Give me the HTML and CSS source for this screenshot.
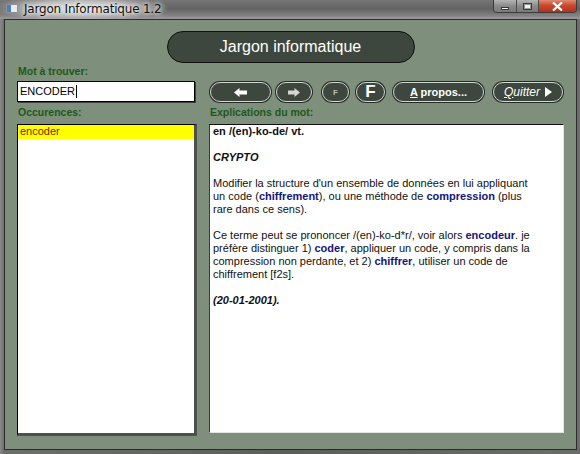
FILE: index.html
```html
<!DOCTYPE html>
<html lang="fr">
<head>
<meta charset="utf-8">
<title>Jargon Informatique 1.2</title>
<link rel="stylesheet" href="styles.css">
</head>
<body>
<div class="window">
  <div class="titlebar">
    <span class="appicon"><span class="appicon-blue"></span></span>
    <span class="title">Jargon Informatique 1.2</span>
    <div class="caption">
      <span class="cap-btn cap-min"><span class="glyph-min"></span></span>
      <span class="cap-btn cap-max"><span class="glyph-max"></span></span>
      <span class="cap-btn cap-close">
        <svg width="11" height="9" viewBox="0 0 11 9"><path d="M1 0.5 L5.5 4.5 L10 0.5 M1 8.5 L5.5 4.5 L10 8.5" stroke="#fff" stroke-width="2.2" fill="none"/></svg>
      </span>
    </div>
  </div>
  <div class="client">
    <div class="banner"><div class="pill">Jargon informatique</div></div>
    <div class="grid">
      <div class="lbl lbl-top">Mot à trouver:</div>
      <div></div>
      <div class="input"><span>ENCODER</span><span class="caret"></span></div>
      <div class="toolbar">
        <span class="btn b-prev">
          <svg width="13" height="9" viewBox="0 0 13 9"><polygon points="0,4.5 5.5,0 5.5,2.5 13,2.5 13,6.5 5.5,6.5 5.5,9" fill="#fff"/></svg>
        </span>
        <span class="btn b-next">
          <svg width="12" height="9" viewBox="0 0 12 9"><polygon points="12,4.5 6.5,0 6.5,2.5 0,2.5 0,6.5 6.5,6.5 6.5,9" fill="#d6d6d6"/></svg>
        </span>
        <span class="btn b-fsmall">F</span>
        <span class="btn b-fbig">F</span>
        <span class="btn b-apropos"><span><u>A</u> propos...</span></span>
        <span class="btn b-quit"><span class="qt"><u>Q</u>uitter</span>
          <svg width="7" height="10" viewBox="0 0 7 10"><polygon points="0,0 7,5 0,10" fill="#fff"/></svg>
        </span>
      </div>
      <div class="lbl lbl-mid">Occurences:</div>
      <div class="lbl lbl-mid">Explications du mot:</div>
      <div class="list"><div class="item sel">encoder</div></div>
      <div class="expl">
        <div class="ln b">en /(en)-ko-de/ vt.</div>
        <div class="ln gap"></div>
        <div class="ln bi">CRYPTO</div>
        <div class="ln gap"></div>
        <div class="ln">Modifier la structure d'un ensemble de données en lui appliquant</div>
        <div class="ln">un code (<b class="ref">chiffrement</b>), ou une méthode de <b class="ref">compression</b> (plus</div>
        <div class="ln">rare dans ce sens).</div>
        <div class="ln gap"></div>
        <div class="ln">Ce terme peut se prononcer /(en)-ko-d*r/, voir alors <b class="ref">encodeur</b>. je</div>
        <div class="ln">préfère distinguer 1) <b class="ref">coder</b>, appliquer un code, y compris dans la</div>
        <div class="ln">compression non perdante, et 2) <b class="ref">chiffrer</b>, utiliser un code de</div>
        <div class="ln">chiffrement [f2s].</div>
        <div class="ln gap"></div>
        <div class="ln bi">(20-01-2001).</div>
      </div>
    </div>
  </div>
</div>
</body>
</html>
```

FILE: styles.css
```css
* { box-sizing: border-box; }
html, body { margin: 0; padding: 0; }
body {
  width: 580px;
  height: 454px;
  overflow: hidden;
  font-family: "Liberation Sans", Arial, sans-serif;
  background: #6f6f6f;
}
.window {
  width: 580px;
  height: 454px;
  display: flex;
  flex-direction: column;
  background: linear-gradient(90deg, #8a8a8a 0, #6e6e6e 4px, #5d5d5d 50%, #6c6c6c 100%);
}
.titlebar {
  height: 19px;
  flex: none;
  display: flex;
  align-items: flex-start;
  background:
    radial-gradient(ellipse 90px 13px at 80px 8px, rgba(232,232,232,0.95), rgba(232,232,232,0.6) 55%, rgba(232,232,232,0) 100%),
    linear-gradient(180deg, #767676 0, #636363 45%, #808080 80%, #9c9c9c 100%);
}
.appicon {
  margin: 4px 0 0 6px;
  width: 12px;
  height: 9px;
  background: #e8ecef;
  border: 1px solid #8a9099;
  display: flex;
}
.appicon-blue { width: 4px; height: 100%; background: #4f7fb3; }
.title {
  margin: 2px 0 0 6px;
  font-family: "DejaVu Sans", sans-serif;
  font-size: 12px;
  letter-spacing: -0.2px;
  line-height: 14px;
  color: #111;
  text-shadow: 0 0 4px #fff, 0 0 6px #fff;
}
.caption {
  margin-left: auto;
  margin-right: 3px;
  display: flex;
  height: 13px;
  border: 1px solid #3c3c3c;
  border-top: none;
  border-radius: 0 0 4px 4px;
  overflow: hidden;
}
.cap-btn {
  height: 12px;
  display: flex;
  align-items: center;
  justify-content: center;
  border-right: 1px solid #4a4a4a;
}
.cap-min { width: 23px; background: linear-gradient(180deg, #b5b5b5, #8a8a8a 50%, #7a7a7a); }
.cap-max { width: 22px; background: linear-gradient(180deg, #b5b5b5, #8a8a8a 50%, #7a7a7a); }
.cap-close { width: 37px; border-right: none; background: linear-gradient(180deg, #e08a70, #c84a2e 45%, #b5301a); }
.glyph-min { width: 8px; height: 3px; background: #f2f2f2; border: 1px solid #3a3a3a; margin-top: 5px; }
.glyph-max { width: 9px; height: 7px; border: 1px solid #3a3a3a; background: #f0f0f0; box-shadow: inset 0 0 0 1px #9a9a9a; }

.client {
  flex: 1;
  margin: 0 3px 4px 4px;
  border: 1px solid #2a2c2a;
  background: #7e8f7b;
  padding: 11px 12px 0 12px;
}
.banner { display: flex; justify-content: center; height: 32px; margin-bottom: 2px; }
.pill {
  width: 248px;
  height: 32px;
  border-radius: 16px;
  background: #3d473d;
  border: 1px solid #111;
  color: #fff;
  font-size: 16px;
  display: flex;
  align-items: center;
  justify-content: center;
}
.grid {
  display: grid;
  grid-template-columns: 178px 355px;
  column-gap: 14px;
  grid-template-rows: 16px 22px 21px 309px;
}
.lbl {
  font-size: 10.5px;
  font-weight: bold;
  line-height: 13px;
  color: #1c5a1c;
  padding-left: 1px;
}
.lbl-mid { padding-top: 3px; }
.input {
  height: 21px;
  background: #fff;
  border: 1px solid #000;
  box-shadow: 1px 1px 0 #3c3f3c;
  font-size: 11px;
  line-height: 19px;
  padding-left: 2px;
  color: #000;
  display: flex;
  align-items: center;
}
.caret { display: inline-block; width: 1px; height: 13px; background: #000; margin-left: 1px; }
.toolbar { display: flex; align-items: flex-start; padding-top: 1px; }
.btn {
  height: 20px;
  border-radius: 10px;
  background: #3d473d;
  border: 1px solid #d4d8d4;
  box-shadow: 0 0 0 1px #262a26;
  color: #fff;
  font-size: 11px;
  font-weight: bold;
  display: flex;
  align-items: center;
  justify-content: center;
  flex: none;
}
.btn u { text-decoration: underline; text-underline-offset: 1px; }
.b-prev { width: 61px; margin-left: 1px; }
.b-next { width: 36px; margin-left: 5px; }
.b-fsmall { width: 27px; margin-left: 10px; font-size: 8px; color: #b8bcb8; }
.b-fbig { width: 29px; margin-left: 7px; font-size: 17px; }
.b-apropos { width: 91px; margin-left: 8px; }
.b-quit { width: 70px; margin-left: 9px; font-weight: normal; font-size: 12px; gap: 5px; }
.qt { font-style: italic; }
.list {
  height: 312px;
  background: #fff;
  border-top: 1px solid #000;
  border-left: 1px solid #000;
  border-right: 3px solid #4c514c;
  border-bottom: 3px solid #4c514c;
  width: 180px;
}
.item {
  height: 14px;
  font-size: 11px;
  line-height: 13px;
  padding-left: 2px;
}
.sel { background: #ffff00; color: #7a1e00; }
.expl {
  height: 309px;
  background: #fff;
  border-top: 1px solid #111;
  border-left: 1px solid #3a3a3a;
  border-right: 1px solid #e4e4e4;
  border-bottom: 1px solid #e4e4e4;
  padding: 0 4px 0 3px;
  font-size: 11px;
  line-height: 13px;
  color: #111;
  overflow: hidden;
}
.ln { height: 13px; white-space: nowrap; }
.gap { height: 13px; }
.expl .b { font-weight: bold; }
.expl .bi { font-weight: bold; font-style: italic; }
.ref { color: #14147a; }
```
